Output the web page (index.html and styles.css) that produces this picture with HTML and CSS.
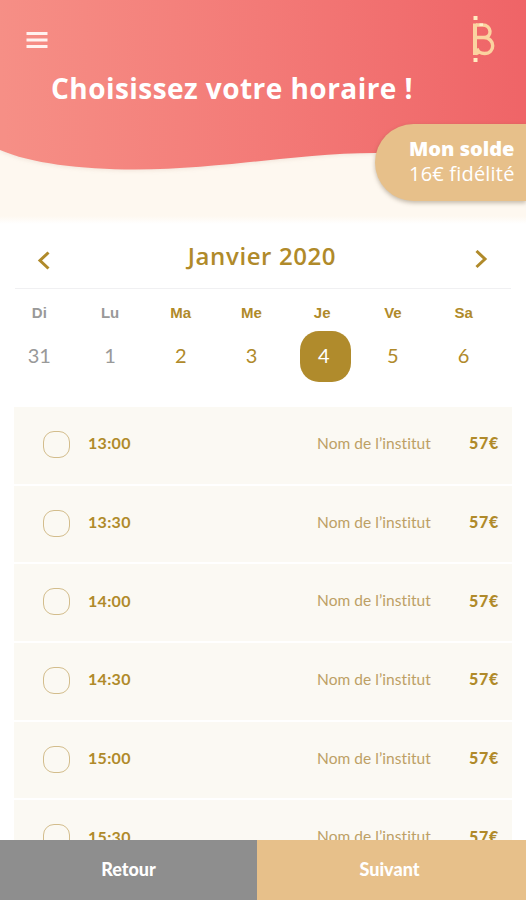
FILE: index.html
```html
<!DOCTYPE html>
<html lang="fr">
<head>
    <meta charset="UTF-8">
    <meta name="viewport" content="width=device-width, initial-scale=1.0">
    <title>Choisissez votre horaire</title>
    <link rel="stylesheet" href="styles.css">
</head>
<body>
    <div class="app">
        <header class="header">
            <svg class="wave" viewBox="0 0 526 224" aria-hidden="true">
                <defs>
                    <linearGradient id="coral" gradientUnits="userSpaceOnUse" x1="0" y1="60" x2="526" y2="30">
                        <stop offset="0" stop-color="#f68f86"/>
                        <stop offset="0.5" stop-color="#f37a77"/>
                        <stop offset="1" stop-color="#ef6467"/>
                    </linearGradient>
                </defs>
                <path fill="url(#coral)" d="M0 0H526V160C470 158 430 153 375 153C300 153 220 169.500 135 169.500C80 169.500 30 163 0 150Z"/>
            </svg>
            <div class="topbar">
                <svg class="menu" width="22" height="18" viewBox="0 0 22 18">
                    <path d="M0.500 2.500H21.500M0.500 9H21.500M0.500 15.500H21.500" stroke="#fff2ef" stroke-width="2.800"/>
                </svg>
                <svg class="logo" width="24" height="48" viewBox="0 0 24 48" fill="none" stroke="#fbd3a0">
                    <path d="M3 7.500V39" stroke-width="4"/>
                    <path d="M4 9H10.500C20 9 20.500 21.500 12 21.500H5M12 21.500C23.500 22 23.500 37.500 12.500 37.500C8.500 37.500 6 35.500 5 32.500" stroke-width="3.400"/>
                    <path d="M4 38L8 36" stroke-width="3"/>
                    <path d="M1.500 2H5.500M1.500 44H5.500" stroke="#ffecc0" stroke-width="4"/>
                    <path d="M7.500 8.700H11" stroke="#fff0cc" stroke-width="2.500"/>
                </svg>
            </div>
            <h1>Choisissez votre horaire !</h1>
            <div class="balance">
                <strong>Mon solde</strong>
                <span>16€ fidélité</span>
            </div>
        </header>

        <section class="calendar">
            <div class="month">
                <svg width="14" height="20" viewBox="0 0 14 20"><path d="M11.500 2.500L3 10.500L11.500 18.500"/></svg>
                <h2>Janvier 2020</h2>
                <svg width="14" height="20" viewBox="0 0 14 20"><path d="M2.500 1L11 9L2.500 17"/></svg>
            </div>
            <div class="week">
                <div class="day off"><b>Di</b><span>31</span></div>
                <div class="day off"><b>Lu</b><span>1</span></div>
                <div class="day"><b>Ma</b><span>2</span></div>
                <div class="day"><b>Me</b><span>3</span></div>
                <div class="day selected"><b>Je</b><span>4</span></div>
                <div class="day"><b>Ve</b><span>5</span></div>
                <div class="day"><b>Sa</b><span>6</span></div>
            </div>
        </section>

        <main class="slots">
            <div class="slot"><i class="check"></i><b class="time">13:00</b><span class="place">Nom de l’institut</span><b class="price">57€</b></div>
            <div class="slot"><i class="check"></i><b class="time">13:30</b><span class="place">Nom de l’institut</span><b class="price">57€</b></div>
            <div class="slot"><i class="check"></i><b class="time">14:00</b><span class="place">Nom de l’institut</span><b class="price">57€</b></div>
            <div class="slot"><i class="check"></i><b class="time">14:30</b><span class="place">Nom de l’institut</span><b class="price">57€</b></div>
            <div class="slot"><i class="check"></i><b class="time">15:00</b><span class="place">Nom de l’institut</span><b class="price">57€</b></div>
            <div class="slot"><i class="check"></i><b class="time">15:30</b><span class="place">Nom de l’institut</span><b class="price">57€</b></div>
        </main>

        <footer class="actions">
            <button class="back">Retour</button>
            <button class="next">Suivant</button>
        </footer>
    </div>
</body>
</html>
```
FILE: styles.css
```css
:root {
    --gold: #b08a2a;
    --sand: #e7c08a;
    --cream: #fef8f0;
    --grey: #8e8e8e;
}
* {
    box-sizing: border-box;
    margin: 0;
    padding: 0;
}
body {
    font-family: Lato, "Liberation Sans", sans-serif;
    font-variant-ligatures: none;
    background: #fff;
    color: var(--gold);
}
.app {
    display: flex;
    flex-direction: column;
    height: 900px;
    overflow: hidden;
}
.header,
h2 {
    font-family: "Open Sans", "Noto Sans", sans-serif;
}
.header {
    position: relative;
    flex: none;
    height: 224px;
    padding-top: 16px;
    background: linear-gradient(var(--cream) 216px, #fff 224px);
    color: #fff;
}
.wave {
    position: absolute;
    top: 0;
    left: 0;
    width: 100%;
    height: 224px;
    filter: drop-shadow(0 1px 2px rgba(160, 110, 80, 0.15));
}
.topbar {
    position: relative;
    display: flex;
    justify-content: space-between;
    align-items: center;
    height: 48px;
    padding: 0 30px 0 26px;
}
h1 {
    position: relative;
    padding-left: 51px;
    margin-top: 5px;
    font-size: 28px;
    line-height: 38px;
    font-weight: 700;
    letter-spacing: 0.450px;
    white-space: nowrap;
}
.balance {
    position: absolute;
    top: 124px;
    right: 0;
    width: 151px;
    height: 77px;
    padding: 12px 0 0 34px;
    border-radius: 39px 0 0 39px;
    background: var(--sand);
    box-shadow: 0 2px 4px rgba(90, 70, 40, 0.35);
    font-size: 20px;
    line-height: 25px;
    white-space: nowrap;
}
.balance strong,
.balance span {
    display: block;
}
.balance strong {
    font-weight: 800;
}
.balance span {
    letter-spacing: 0.2px;
}
.calendar {
    flex: none;
    height: 183px;
    padding: 0 15px;
}
.month {
    display: flex;
    justify-content: space-between;
    align-items: center;
    height: 65px;
    padding: 4px 23px 0 22px;
    border-bottom: 1px solid #f0f0f2;
}
.month svg {
    margin-top: 4px;
    fill: none;
    stroke: var(--gold);
    stroke-width: 3;
}
h2 {
    margin: -5px 1px 0 0;
    font-size: 24px;
    line-height: 30px;
    font-weight: 600;
    letter-spacing: 0.6px;
}
.week {
    display: grid;
    grid-template-columns: repeat(7, 1fr);
    margin: 15px 12px 0 -11px;
}
.day {
    display: flex;
    flex-direction: column;
    align-items: center;
}
.day b {
    font-family: "Liberation Sans", sans-serif;
    font-size: 15px;
    line-height: 18px;
}
.day span {
    width: 51px;
    height: 51px;
    margin-top: 9px;
    border-radius: 19px;
    font-size: 20px;
    line-height: 49px;
    text-align: center;
}
.day.off {
    color: #999;
}
.day.selected span {
    margin-left: 6px;
    background: #b08b2c;
    color: #fff;
    padding-right: 3px;
}
.slots {
    flex: 1;
    min-height: 0;
    margin: 0 14px;
    overflow: hidden;
}
.slot {
    display: flex;
    align-items: center;
    height: 78.700px;
    padding: 0 13px 5px 29px;
    border-bottom: 2px solid #fff;
    background: #fbf9f3;
    font-size: 16px;
}
.check {
    width: 27px;
    height: 27px;
    margin: 3px 18px 0 0;
    border: 1px solid #d3bd8c;
    border-radius: 11px;
}
.time {
    letter-spacing: 0.3px;
}
.place {
    width: 114px;
    margin-left: auto;
    color: #bda065;
    font-size: 15.500px;
    letter-spacing: 0.050px;
    white-space: nowrap;
}
.price {
    width: 30px;
    margin-left: 38px;
    font-weight: 900;
    letter-spacing: 0.7px;
}
.actions {
    display: flex;
    flex: none;
    height: 60px;
}
.actions button {
    border: none;
    padding-bottom: 2px;
    font-family: inherit;
    font-size: 18px;
    font-weight: 900;
    color: #fff;
}
.back {
    width: 257px;
    background: var(--grey);
}
.next {
    flex: 1;
    padding-right: 4px;
    background: var(--sand);
}
```
